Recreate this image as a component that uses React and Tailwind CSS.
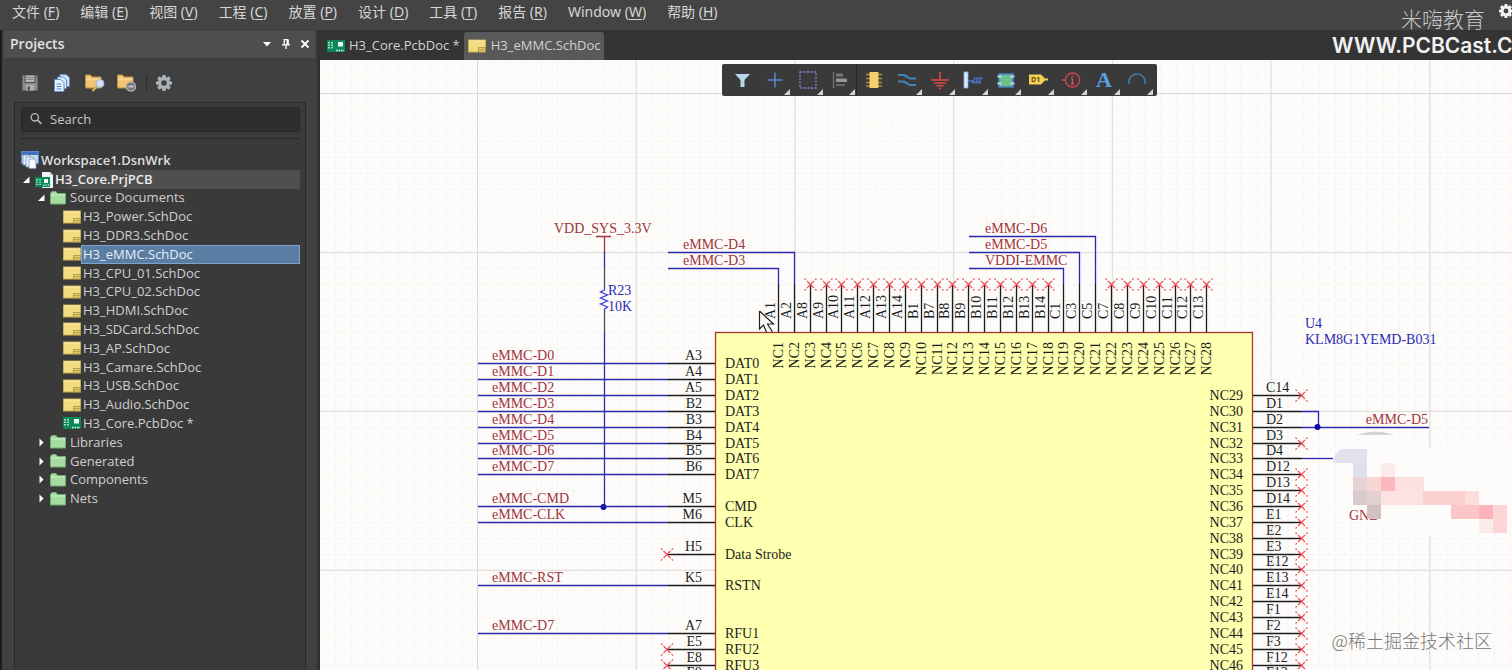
import React from "react";

/* ---------- icons ---------- */

const SchIcon = () => (
  <svg className="h-[14px] w-[18px] shrink-0" viewBox="0 0 18 14" aria-hidden="true">
    <rect x="0.5" y="1" width="17" height="12" fill="#f3dc80" stroke="#c9ae55" />
    <path d="M1 2h16" stroke="#fdf0b0" />
    <path d="M10.500 8.500h7v4.500h-7zM10.500 10.700h7" fill="#e8cd70" stroke="#a48d48" strokeWidth="0.8" />
  </svg>
);

const PcbIcon = () => (
  <svg className="h-[14px] w-[18px] shrink-0" viewBox="0 0 18 14" aria-hidden="true">
    <rect x="0" y="1" width="18" height="12" fill="#0c8758" />
    <path d="M2 3v7M5 3v7" stroke="#c9f2df" strokeWidth="1.6" strokeDasharray="1.5 1" />
    <rect x="11" y="3" width="5" height="4.5" fill="#e9fff5" />
    <path d="M9 11.5h8" stroke="#d8f7e8" strokeWidth="1.5" strokeDasharray="1.5 1" />
  </svg>
);

const ProjectIcon = () => (
  <svg className="h-[17px] w-[18px] shrink-0" viewBox="0 0 18 17" aria-hidden="true">
    <path d="M7 1h8l3 3v13H7z" fill="#eef4fa" />
    <path d="M15 1v3h3" fill="#b6c6d8" />
    <rect x="0" y="6" width="15" height="10" fill="#0c8758" />
    <path d="M2 8v6M5 8v6" stroke="#c9f2df" strokeWidth="1.4" strokeDasharray="1.4 1" />
    <rect x="9" y="8" width="4" height="4" fill="#e9fff5" />
    <path d="M8 14.2h6" stroke="#d8f7e8" strokeWidth="1.3" strokeDasharray="1.4 1" />
  </svg>
);

const WorkspaceIcon = () => (
  <svg className="h-[18px] w-[18px] shrink-0" viewBox="0 0 18 18" aria-hidden="true">
    <rect x="0.5" y="0.5" width="17" height="12" fill="#c7d9ef" stroke="#5d83bd" />
    <rect x="1" y="1" width="16" height="3" fill="#3f6fc0" />
    <path d="M2 4h6l2 2v8H2z" fill="#e6eef8" stroke="#7896bf" strokeWidth="0.8" />
    <path d="M5 6h6l2 2v8H5z" fill="#eff5fb" stroke="#7896bf" strokeWidth="0.8" />
    <path d="M8 8h5l2 2v7.500H8z" fill="#f8fbff" stroke="#7896bf" strokeWidth="0.8" />
  </svg>
);

const FolderIcon = () => (
  <svg className="h-[14px] w-4 shrink-0" viewBox="0 0 16 14" aria-hidden="true">
    <path d="M0.500 2L2 0.500h4L7.500 2.500h8V13H0.500z" fill="#a5dca2" stroke="#6fae70" />
    <path d="M1 4h14" stroke="#c9efc5" />
  </svg>
);

const Caret = ({ open }) => (
  <svg className="h-[9px] w-[9px] shrink-0" viewBox="0 0 9 9" aria-hidden="true">
    {open ? <path d="M7.500 1.500v6.500H1z" fill="#fff" /> : <path d="M2.500 0.500L6.500 4.500L2.500 8.500z" fill="#fff" />}
  </svg>
);

const GearShape = ({ color, hole }) => (
  <g>
    {[0, 45, 90, 135].map((a) => (
      <rect key={a} x="6.200" y="0" width="3.600" height="16" rx="0.800" fill={color} transform={`rotate(${a} 8 8)`} />
    ))}
    <circle cx="8" cy="8" r="6" fill={color} />
    <circle cx="8" cy="8" r="2.800" fill={hole} />
  </g>
);

const SaveIcon = () => (
  <svg className="h-4 w-4" viewBox="0 0 16 16" aria-hidden="true">
    <path d="M0.500 0.500h15v15h-15z" fill="#8d8d8d" />
    <path d="M3 0.500h10v7H3z" fill="#b4b4b4" />
    <path d="M4 2.500h8M4 4.500h8" stroke="#858585" />
    <path d="M3 7.500h10M3 0v8M13 0v8" stroke="#4a4a4a" />
    <path d="M4 10h8v5.500H4z" fill="#b0b0b0" />
    <path d="M5.500 11.500h2.500v4H5.500z" fill="#555" />
  </svg>
);

const CopyIcon = () => (
  <svg className="h-[18px] w-4" viewBox="0 0 16 18" aria-hidden="true">
    <path d="M6 0.500h6l3.500 3v9H6z" fill="#cfe2f5" stroke="#5f8fc4" />
    <path d="M3.500 3h6l3 3v8.500h-9z" fill="#dcebf9" stroke="#5f8fc4" />
    <path d="M0.500 5.500h6l3.500 3v9H0.500z" fill="#eaf4fd" stroke="#5f8fc4" />
    <path d="M2.500 10h5M2.500 12.500h5M2.500 15h5" stroke="#4b86cc" />
  </svg>
);

const FolderSearchIcon = () => (
  <svg className="h-[18px] w-5" viewBox="0 0 20 18" aria-hidden="true">
    <path d="M0.500 1h5l1.500 2h9v11h-15.500z" fill="#f1c677" stroke="#b98d45" />
    <path d="M1 5h15" stroke="#ffe3a6" />
    <path d="M12.500 11.500L7.500 17" stroke="#d7a95a" strokeWidth="2.500" />
    <circle cx="15" cy="9.500" r="4" fill="#cfe0f2" stroke="#9fb2c8" />
  </svg>
);

const FolderGearIcon = () => (
  <svg className="h-[18px] w-5" viewBox="0 0 20 18" aria-hidden="true">
    <path d="M0.500 1h5l1.500 2h9v11h-15.500z" fill="#f1c677" stroke="#b98d45" />
    <path d="M1 5h15" stroke="#ffe3a6" />
    <circle cx="14" cy="12.500" r="4.500" fill="#777" stroke="#a8a8a8" strokeWidth="1.500" />
    <path d="M11.500 12.500h5" stroke="#d0d0d0" strokeWidth="1.800" />
  </svg>
);

/* ---------- menu bar ---------- */

const menus = [
  ["文件", "F"],
  ["编辑", "E"],
  ["视图", "V"],
  ["工程", "C"],
  ["放置", "P"],
  ["设计", "D"],
  ["工具", "T"],
  ["报告", "R"],
  ["Window", "W"],
  ["帮助", "H"],
];

const MenuBar = () => (
  <nav className="flex h-[30px] shrink-0 items-center gap-[21px] bg-[#444444] pb-[7px] pl-3 text-[14px] text-[#d6d6d6]">
    {menus.map(([name, key]) => (
      <button key={key} type="button" className="whitespace-nowrap leading-5">
        {name} (<span className="underline underline-offset-2">{key}</span>)
      </button>
    ))}
  </nav>
);

/* ---------- projects panel ---------- */

const files = [
  "H3_Power.SchDoc",
  "H3_DDR3.SchDoc",
  "H3_eMMC.SchDoc",
  "H3_CPU_01.SchDoc",
  "H3_CPU_02.SchDoc",
  "H3_HDMI.SchDoc",
  "H3_SDCard.SchDoc",
  "H3_AP.SchDoc",
  "H3_Camare.SchDoc",
  "H3_USB.SchDoc",
  "H3_Audio.SchDoc",
];

const FileRow = ({ icon, name, selected }) => (
  <li className="flex items-center pl-[42px]">
    {icon}
    <button
      type="button"
      className={
        selected
          ? "h-full flex-1 border border-[#7fa3c8] bg-[#5a7da4] pl-px text-left leading-none text-[#e8eef5]"
          : "h-full flex-1 border border-transparent pl-px text-left leading-none"
      }
    >
      {name}
    </button>
  </li>
);

const FolderRow = ({ name, open }) => (
  <li className="flex items-center pl-4">
    <Caret open={open} />
    <button type="button" className="ml-1 flex items-center gap-1 leading-none">
      <FolderIcon />
      {name}
    </button>
  </li>
);

const ProjectsPanel = () => (
  <aside className="flex w-[320px] shrink-0 flex-col border-l-2 border-r-[3px] border-l-[#1c1c1c] border-r-[#323232] bg-[#404040] text-[13px] text-[#cfcfcf]">
    <header className="mx-[2px] mt-px flex h-[27px] shrink-0 items-center bg-[#4e4e4e] pb-[2px] pl-[6px] pr-[5px]">
      <h2 className="flex-1 text-[14px] font-semibold text-[#e2e2e2]">Projects</h2>
      <div className="flex items-center gap-[9px]">
        <button type="button" aria-label="Panel menu">
          <svg className="h-[10px] w-[10px]" viewBox="0 0 10 10"><path d="M1 3h8L5 7.500z" fill="#fff" /></svg>
        </button>
        <button type="button" aria-label="Pin panel">
          <svg className="h-[10px] w-[10px]" viewBox="0 0 10 10"><path d="M2.500 0.700h5M3.300 1v4.500M6.200 1v4.500M7.200 1v4.500M1 5.800h8M5 6v4" stroke="#fff" strokeWidth="1.300" fill="none" /></svg>
        </button>
        <button type="button" aria-label="Close panel">
          <svg className="h-[10px] w-[10px]" viewBox="0 0 10 10"><path d="M1.500 1.500l7 7M8.500 1.500l-7 7" stroke="#fff" strokeWidth="1.800" /></svg>
        </button>
      </div>
    </header>

    <div className="flex h-[44px] shrink-0 items-center pl-5 pt-[6px]">
      <button type="button" aria-label="Save"><SaveIcon /></button>
      <button type="button" aria-label="Copy documents" className="ml-4"><CopyIcon /></button>
      <button type="button" aria-label="Find in project" className="ml-[15px]"><FolderSearchIcon /></button>
      <button type="button" aria-label="Project options" className="ml-3"><FolderGearIcon /></button>
      <span className="mx-[9px] h-4 w-px bg-[#2c2c2c]" />
      <button type="button" aria-label="Settings">
        <svg className="h-4 w-4" viewBox="0 0 16 16"><GearShape color="#a9b2b8" hole="#404040" /></svg>
      </button>
    </div>

    <div className="ml-3 mr-[11px] flex-1 border-x border-t border-[#2b2b2b] bg-[#3a3a3a] pl-[6px] pr-[5px] pt-1">
      <label className="flex h-[25px] items-center gap-2 rounded-[3px] border border-[#272727] bg-[#2e2e2e] pb-[2px] pl-2">
        <svg className="h-[13px] w-[13px]" viewBox="0 0 13 13" aria-hidden="true">
          <circle cx="5.200" cy="5.200" r="4" fill="none" stroke="#b4b4b4" strokeWidth="1.500" />
          <path d="M8.200 8.200L12.300 12.300" stroke="#b4b4b4" strokeWidth="1.800" />
        </svg>
        <input
          type="text"
          aria-label="Search"
          placeholder="Search"
          className="w-full bg-transparent text-[13px] leading-4 text-[#cfcfcf] outline-none placeholder:text-[#c9c9c9]"
        />
      </label>
      <div className="mt-[6px] h-px bg-[#282828]" />
      <ul className="mt-3 grid h-[357px] auto-rows-fr">
        <li className="flex items-center">
          <WorkspaceIcon />
          <button type="button" className="ml-[2px] font-semibold leading-none text-[#dedede]">Workspace1.DsnWrk</button>
        </li>
        <li className="flex items-center bg-gradient-to-r from-[#3a3a3a] from-10% to-[#4f4f4f] to-20% pl-px">
          <Caret open />
          <button type="button" className="ml-1 flex items-center gap-[2px] font-semibold leading-none text-[#ececec]">
            <ProjectIcon />
            H3_Core.PrjPCB
          </button>
        </li>
        <FolderRow name="Source Documents" open />
        {files.map((f) => (
          <FileRow key={f} icon={<SchIcon />} name={f} selected={f === "H3_eMMC.SchDoc"} />
        ))}
        <FileRow icon={<PcbIcon />} name="H3_Core.PcbDoc *" />
        <FolderRow name="Libraries" />
        <FolderRow name="Generated" />
        <FolderRow name="Components" />
        <FolderRow name="Nets" />
      </ul>
    </div>
  </aside>
);

/* ---------- floating toolbar ---------- */

const tools = [
  { name: "Filter", art: <path d="M3 4h15l-5.500 6v7h-4v-7z" fill="#b5d8ea" /> },
  { name: "Move", menu: true, art: <path d="M10 2.500v15M2.500 10h15" stroke="#5a86c9" strokeWidth="1.600" fill="none" /> },
  { name: "Select area", menu: true, art: <rect x="2" y="2" width="16" height="16" fill="none" stroke="#7f86d8" strokeWidth="1.300" strokeDasharray="2 1.500" /> },
  {
    name: "Align",
    menu: true,
    divider: true,
    art: (
      <g>
        <path d="M3.500 2v16" stroke="#6d6d6d" strokeWidth="1.500" />
        <rect x="6" y="3.500" width="7" height="3" fill="#777" />
        <rect x="6" y="8.500" width="11" height="3.500" fill="#959595" />
        <rect x="6" y="14" width="9" height="2" fill="#666" />
      </g>
    ),
  },
  {
    name: "Place part",
    art: (
      <g>
        <path d="M2 4.500h16M2 8.500h16M2 12.500h16M2 16h16" stroke="#a98c3e" strokeWidth="1.500" />
        <rect x="5.500" y="2" width="9" height="16" fill="#f6cf6b" />
      </g>
    ),
  },
  {
    name: "Place wire",
    menu: true,
    art: <path d="M1 5h5c4 0 4 3.500 8 3.500h5M1 11.500h5c4 0 4 3.500 8 3.500h5" stroke="#4287bd" strokeWidth="2" fill="none" />,
  },
  { name: "Place power port", menu: true, art: <path d="M10 2v8M1 10h18M4 13h12M6.500 15.700h7M9 18.500h2" stroke="#e04848" strokeWidth="1.600" fill="none" /> },
  {
    name: "Place harness",
    menu: true,
    art: (
      <g>
        <rect x="1" y="2" width="4" height="16" fill="#dbe8fb" stroke="#7ea8e6" strokeWidth="0.800" />
        <path d="M5 11h5M9 12.500h9" stroke="#4d79d8" strokeWidth="1.500" />
        <path d="M10 12l2 -4M13 12l2 -4M16 12l2 -4M11 8h9" stroke="#4d79d8" strokeWidth="1.200" fill="none" />
      </g>
    ),
  },
  {
    name: "Place sheet symbol",
    menu: true,
    art: (
      <g>
        <rect x="3" y="4" width="14" height="13" fill="#6cc08a" stroke="#4d7fc7" strokeWidth="1.500" />
        <path d="M1.500 6.500h4M1.500 13.500h4M14.500 6.500h4M14.500 13.500h4" stroke="#c3d9fb" strokeWidth="2" />
      </g>
    ),
  },
  {
    name: "Place port",
    menu: true,
    art: (
      <g>
        <path d="M0 4.500h12l4 4h3v2h-3l-4 4H0z" fill="#f4cf55" />
        <text x="2" y="12" fontSize="7" fontWeight="700" fill="#5b4a14">D1</text>
      </g>
    ),
  },
  {
    name: "Place directive",
    menu: true,
    art: (
      <g>
        <circle cx="10.500" cy="10" r="7" fill="none" stroke="#c94450" strokeWidth="1.500" />
        <path d="M0 10h4M10.500 8.500v5.500M9 14h3M9 8.500h1.500M10.500 5.500v1.500" stroke="#e04a50" strokeWidth="1.500" fill="none" />
      </g>
    ),
  },
  { name: "Place text", menu: true, art: <text x="9" y="17" textAnchor="middle" fontSize="22" fontWeight="700" fontFamily="Liberation Serif, serif" fill="#5da0e0">A</text> },
  { name: "Place arc", menu: true, art: <path d="M1 14a8.200 8.200 0 1 1 16 0" stroke="#41779f" strokeWidth="1.600" fill="none" /> },
];

const FloatingToolbar = () => (
  <div className="absolute left-[402px] top-1 flex h-8 rounded-[2px] bg-[#3a3a3a] px-[3px]">
    {tools.map((t) => (
      <button
        key={t.name}
        type="button"
        aria-label={t.name}
        className={
          t.divider
            ? "relative flex w-[33px] items-center justify-center border-r border-[#262626]"
            : "relative flex w-[33px] items-center justify-center"
        }
      >
        <svg className="h-5 w-5 overflow-visible" viewBox="0 0 20 20" aria-hidden="true">{t.art}</svg>
        {t.menu && (
          <svg className="absolute bottom-px right-px h-[6px] w-[6px]" viewBox="0 0 6 6" aria-hidden="true">
            <path d="M6 0v6H0z" fill="#d4d4d4" />
          </svg>
        )}
      </button>
    ))}
  </div>
);

/* ---------- schematic ---------- */

const PITCH = 15.86;
const rowY = (k) => Math.round(363.2 + k * PITCH) + 0.5;
const colX = (k) => Math.round(778 + k * PITCH) + 0.5;

const BLUE = "#2a2ab0";
const RED = "#a0333b";
const INK = "#1c1c1c";

const leftPins = [
  [0, "A3", "DAT0", "eMMC-D0"],
  [1, "A4", "DAT1", "eMMC-D1"],
  [2, "A5", "DAT2", "eMMC-D2"],
  [3, "B2", "DAT3", "eMMC-D3"],
  [4, "B3", "DAT4", "eMMC-D4"],
  [5, "B4", "DAT5", "eMMC-D5"],
  [6, "B5", "DAT6", "eMMC-D6"],
  [7, "B6", "DAT7", "eMMC-D7"],
  [9, "M5", "CMD", "eMMC-CMD"],
  [10, "M6", "CLK", "eMMC-CLK"],
  [12, "H5", "Data Strobe", null],
  [14, "K5", "RSTN", "eMMC-RST"],
  [17, "A7", "RFU1", "eMMC-D7"],
  [18, "E5", "RFU2", null],
  [19, "E8", "RFU3", null],
  [20, "E9", "", null],
];

const topPins = [
  "A1", "A2", "A8", "A9", "A10", "A11", "A12", "A13", "A14", "B1", "B7", "B8", "B9", "B10",
  "B11", "B12", "B13", "B14", "C1", "C3", "C5", "C7", "C8", "C9", "C10", "C11", "C12", "C13",
];
const wiredTop = [0, 1, 18, 19, 20];

const rightPins = [
  "C14", "D1", "D2", "D3", "D4", "D12", "D13", "D14", "E1", "E2", "E3", "E12", "E13", "E14",
  "F1", "F2", "F3", "F12", "F13",
];
const wiredRight = [1, 2, 4];

const NoConnect = ({ x, y }) => (
  <path
    d={`M${x} ${y}l-6 -6M${x} ${y}l6 -6M${x} ${y}l-6 6M${x} ${y}l6 6`}
    stroke="#f0505a"
    strokeWidth="1.200"
    strokeDasharray="5 1.500 3"
    fill="none"
  />
);

const mosaic = [
  [1345, 449, 22, 14, "#e2e2ee"],
  [1353, 463, 14, 14, "#dfe0ec"],
  [1353, 477, 14, 14, "#e5d3d6"],
  [1367, 477, 14, 14, "#f7d5d5"],
  [1381, 463, 14, 14, "#fdeaea"],
  [1381, 477, 14, 14, "#fcb9bd"],
  [1395, 477, 29, 14, "#fde1e1"],
  [1353, 491, 14, 14, "#d9cbce"],
  [1367, 491, 14, 14, "#e3d0d0"],
  [1381, 491, 42, 14, "#fde2e2"],
  [1423, 491, 42, 14, "#fccfd0"],
  [1465, 491, 14, 14, "#fddcdc"],
  [1367, 505, 14, 14, "#d5c0c1"],
  [1451, 505, 28, 14, "#fcc6c8"],
  [1479, 505, 14, 14, "#fbb4b9"],
  [1493, 505, 14, 28, "#fdd5d6"],
  [1479, 519, 14, 14, "#fdeaea"],
];

const Schematic = () => (
  <svg className="h-full w-full" role="img" aria-label="H3_eMMC schematic" fontFamily="Liberation Serif, serif" fontSize="14">
    <defs>
      <pattern id="minor" width="15.88" height="15.88" patternUnits="userSpaceOnUse" x="477.500" y="93.500">
        <path d="M0.500 0v16M0 0.500h16" stroke="#f5f2ee" strokeDasharray="6 2" fill="none" />
      </pattern>
      <pattern id="major" width="158.700" height="158.900" patternUnits="userSpaceOnUse" x="477" y="93">
        <path d="M0.500 0v160M0 0.500h160" stroke="#dcdad8" fill="none" />
      </pattern>
    </defs>
    <g transform="translate(-320 -60)">
      <rect x="320" y="60" width="4000" height="3000" fill="#fefcfa" />
      <rect x="320" y="60" width="4000" height="3000" fill="url(#minor)" />
      <rect x="320" y="60" width="4000" height="3000" fill="url(#major)" />

      {/* pixelated smudge with its cleared surroundings */}
      <path d="M1340 449q0 -14 20 -14h34l36 14h82v72l-24 14h-90q-58 -20 -58 -60z" fill="#fefcfb" />
      <path d="M1357 435q18 -7 37 0z" fill="#d5d3d6" />
      <text x="1349" y="520" fill={RED}>GND</text>
      <path d="M1364 505h22v8h-22zM1378 508h9v14h-9z" fill="#fefcfb" />
      {mosaic.map(([x, y, w, h, c]) => (
        <rect key={`${x}-${y}`} x={x} y={y} width={w} height={h} fill={c} shapeRendering="crispEdges" />
      ))}
      <path d="M1333 463q1 -10 8 -14h4v14z" fill="#e2e2ee" />

      {/* pull-up on CMD */}
      <text x="554" y="233" fill={RED}>VDD_SYS_3.3V</text>
      <path d="M596 236.500h15M604.500 236v17" stroke={RED} strokeWidth="1.300" fill="none" />
      <path d="M604.500 252v16M604.500 332V507" stroke={BLUE} strokeWidth="1.300" />
      <path d="M604.500 268v20M604.500 311v21" stroke="#4a4a5c" strokeWidth="1.300" />
      <path d="M604.500 288v2l-4 2l7 3l-7 3l7 3l-7 3l7 3l-3 2v2" stroke="#3535e0" strokeWidth="1.200" fill="none" />
      <text x="608" y="295" fill={BLUE}>R23</text>
      <text x="608" y="311" fill={BLUE}>10K</text>
      <circle cx="603.500" cy="507" r="3" fill="#0c0c9c" />

      {/* nets entering from the top */}
      <g stroke={BLUE} strokeWidth="1.300" fill="none">
        <path d={`M668 252.500H${colX(1)}V284`} />
        <path d={`M668 268.500H${colX(0)}V284`} />
        <path d={`M969 236.500H${colX(20)}V284`} />
        <path d={`M969 252.500H${colX(19)}V284`} />
        <path d={`M969 268.500H${colX(18)}V284`} />
      </g>
      <g fill={RED}>
        <text x="683" y="249">eMMC-D4</text>
        <text x="683" y="265">eMMC-D3</text>
        <text x="985" y="233">eMMC-D6</text>
        <text x="985" y="249">eMMC-D5</text>
        <text x="985" y="265">VDDI-EMMC</text>
      </g>

      {/* chip body */}
      <rect x="715.500" y="332.500" width="537" height="800" fill="#ffffb0" stroke="#a5382f" strokeWidth="1.300" />
      <text x="1305" y="328" fill={BLUE}>U4</text>
      <text x="1305" y="344" fill={BLUE}>KLM8G1YEMD-B031</text>

      {topPins.map((p, k) => {
        const x = colX(k);
        return (
          <g key={p}>
            <path d={`M${x} 284V332`} stroke={INK} strokeWidth="1.300" />
            <text transform={`translate(${x - 4} 319) rotate(-90)`} fill={INK}>{p}</text>
            <text transform={`translate(${x + 4} 342) rotate(-90)`} textAnchor="end" fill={INK}>{`NC${k + 1}`}</text>
            {!wiredTop.includes(k) && <NoConnect x={x} y={284.5} />}
          </g>
        );
      })}

      {leftPins.map(([k, pin, name, net]) => {
        const y = rowY(k);
        return (
          <g key={pin}>
            <path d={`M668 ${y}H715`} stroke={INK} strokeWidth="1.300" />
            <text x="702" y={y - 4} textAnchor="end" fill={INK}>{pin}</text>
            {name && <text x="725" y={y + 4} fill={INK}>{name}</text>}
            {net ? (
              <>
                <path d={`M478 ${y}H668`} stroke={BLUE} strokeWidth="1.300" />
                <text x="492" y={y - 4} fill={RED}>{net}</text>
              </>
            ) : (
              <NoConnect x={667} y={y} />
            )}
          </g>
        );
      })}

      {rightPins.map((pin, i) => {
        const y = rowY(i + 2);
        return (
          <g key={pin}>
            <path d={`M1253 ${y}H1302`} stroke={INK} strokeWidth="1.300" />
            <text x="1266" y={y - 4} fill={INK}>{pin}</text>
            <text x="1243" y={y + 4} textAnchor="end" fill={INK}>{`NC${29 + i}`}</text>
            {!wiredRight.includes(i) && <NoConnect x={1301.5} y={y} />}
          </g>
        );
      })}

      {/* nets leaving on the right */}
      <g stroke={BLUE} strokeWidth="1.300" fill="none">
        <path d={`M1302 ${rowY(3)}H1318.500V427`} />
        <path d={`M1302 ${rowY(4)}H1429`} />
        <path d={`M1302 ${rowY(6)}H1333`} />
      </g>
      <circle cx="1317.500" cy="427" r="3" fill="#0c0c9c" />
      <text x="1428" y="424" textAnchor="end" fill={RED}>eMMC-D5</text>

      {/* mouse pointer */}
      <path d="M759.500 311l14 13h-6l5 8M759.500 311v18l4 -4l3 7" fill="none" stroke="#222" strokeWidth="1.200" />
    </g>
  </svg>
);

/* ---------- document area ---------- */

const DocumentArea = () => (
  <main className="flex min-w-0 flex-1 flex-col">
    <div className="flex h-[30px] shrink-0 items-end bg-[#343434] text-[13px] text-[#d2d2d2]">
      <button type="button" className="flex h-7 items-center gap-1 whitespace-nowrap pl-[7px] pr-1">
        <PcbIcon />
        H3_Core.PcbDoc *
      </button>
      <button type="button" className="flex h-7 items-center gap-[5px] whitespace-nowrap rounded-t-[3px] bg-[#595959] pl-1 pr-[3px]">
        <SchIcon />
        H3_eMMC.SchDoc
      </button>
    </div>
    <div className="relative min-h-0 flex-1 overflow-hidden bg-[#fefcfa]">
      <Schematic />
      <FloatingToolbar />
    </div>
  </main>
);

export default function App() {
  return (
    <div className="relative flex h-screen flex-col overflow-hidden bg-[#343434] font-['Noto_Sans','Noto_Sans_CJK_SC',sans-serif]">
      <MenuBar />
      <div className="flex min-h-0 flex-1 font-['Open_Sans','Noto_Sans_CJK_SC',sans-serif]">
        <ProjectsPanel />
        <DocumentArea />
      </div>

      <button type="button" aria-label="Preferences" className="absolute -right-px top-1">
        <svg className="h-[14px] w-[14px]" viewBox="0 0 16 16"><GearShape color="#f4f4f4" hole="#444444" /></svg>
      </button>
      <div className="absolute right-0 top-[6px] w-[180px] overflow-hidden whitespace-nowrap">
        <p className="pl-[69px] font-['Noto_Sans_CJK_SC',sans-serif] text-[21px] font-light leading-6 text-[#c8c8c8]">米嗨教育</p>
        <p className="font-['Inter',sans-serif] text-[21px] font-semibold leading-8 text-[#f2f2f2]">WWW.PCBCast.C</p>
      </div>
      <p className="absolute bottom-4 right-5 font-['Noto_Sans_CJK_SC',sans-serif] text-[18px] font-light leading-7 text-[#777777]">@稀土掘金技术社区</p>
    </div>
  );
}
